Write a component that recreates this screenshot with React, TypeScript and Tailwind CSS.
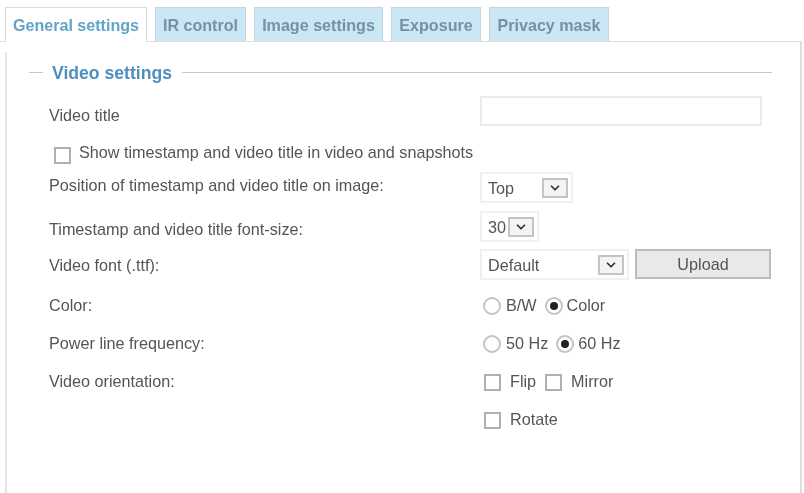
import { ChevronDown } from 'lucide-react';

const tabs = [
  { label: 'General settings', width: 'w-[142px]', active: true },
  { label: 'IR control', width: 'w-[91px]' },
  { label: 'Image settings', width: 'w-[129px]' },
  { label: 'Exposure', width: 'w-[90px]' },
  { label: 'Privacy mask', width: 'w-[120px]' },
];

function Tab(props: { label: string; width: string; active?: boolean }) {
  if (props.active) {
    return (
      <div
        className={`${props.width} h-[35px] -mb-px flex items-center justify-center bg-white border border-b-0 border-[#dadada] text-[16.1px] font-bold text-[#63a3c8]`}
      >
        {props.label}
      </div>
    );
  }
  return (
    <div
      className={`${props.width} h-[34px] flex items-center justify-center bg-[#cbe7f6] border border-b-0 border-[#c6d6df] text-[16.1px] font-bold text-[#7492a6]`}
    >
      {props.label}
    </div>
  );
}

function Row(props: { height: string; label?: string; labelClass?: string; children?: React.ReactNode }) {
  return (
    <div className={`${props.height} flex items-center`}>
      <div className={`w-[431px] shrink-0 text-[#555] ${props.labelClass ?? ''}`}>{props.label}</div>
      <div className="flex items-center">{props.children}</div>
    </div>
  );
}

function Select(props: { value: string; width: string }) {
  return (
    <div className={`${props.width} h-[31px] flex items-center justify-between pl-[6px] pr-[3px] border-2 border-[#f0f0f0] text-[#555]`}>
      <span>{props.value}</span>
      <span className="w-[26px] h-[20px] flex items-center justify-center border-2 border-[#c4c4c4] bg-[#f4f4f4]">
        <ChevronDown className="w-[14px] h-[14px] text-[#333]" strokeWidth={3} />
      </span>
    </div>
  );
}

function Radio(props: { checked?: boolean }) {
  return (
    <span className="w-[18px] h-[18px] mt-[2px] rounded-full border-2 border-[#c4c4c4] flex items-center justify-center">
      {props.checked && <span className="w-[8px] h-[8px] rounded-full bg-[#222]" />}
    </span>
  );
}

function Checkbox() {
  return <span className="block w-[17px] h-[17px] mt-[2px] border-2 border-[#b0b0b0]" />;
}

export default function App() {
  return (
    <div className="w-[804px] h-[493px] overflow-hidden bg-white pt-[7px] blur-[0.5px] text-[16.2px] leading-[20px] font-['Liberation_Sans',Arial,sans-serif]">
      <div className="flex gap-[8px] pl-[5px]">
        {tabs.map((t) => (
          <Tab key={t.label} {...t} />
        ))}
      </div>
      <div className="h-[452px] border-t border-r-2 border-[#dedede] pt-[10px] mr-[2px]">
        <div className="h-full ml-[5px] border-l-2 border-[#e6e6e6]">
          <div className="flex items-center h-[40px] pl-[22px] pr-[28px] pt-[1px]">
            <span className="w-[14px] h-px bg-[#c8c8c8]" />
            <span className="ml-[9px] mr-[10px] text-[17.6px] font-bold text-[#4f8fc0]">Video settings</span>
            <span className="flex-1 h-px bg-[#c8c8c8]" />
          </div>
          <div className="pl-[42px]">
            <Row height="h-[37px]" label="Video title" labelClass="mt-[9px]">
              <div className="w-[282px] h-[30px] border-2 border-[#ebebeb]" />
            </Row>
            <div className="h-[40px] flex items-center pl-[5px] gap-[8px] text-[#555]">
              <span className="mt-[10px]">
                <Checkbox />
              </span>
              <span className="mt-[6px]">Show timestamp and video title in video and snapshots</span>
            </div>
            <Row height="h-[37px]" label="Position of timestamp and video title on image:" labelClass="mb-[5px]">
              <Select value="Top" width="w-[93px]" />
            </Row>
            <Row height="h-[41px]" label="Timestamp and video title font-size:" labelClass="mt-[5px]">
              <Select value="30" width="w-[59px]" />
            </Row>
            <Row height="h-[35px]" label="Video font (.ttf):">
              <Select value="Default" width="w-[149px]" />
              <button className="ml-[6px] w-[136px] h-[30px] -mt-[1px] border-2 border-[#bcbcbc] bg-[#e9e9e9] text-[#555]">
                Upload
              </button>
            </Row>
            <Row height="h-[46px]" label="Color:">
              <div className="flex items-center pl-[3px] text-[#555]">
                <Radio />
                <span className="ml-[5px] mr-[8px]">B/W</span>
                <Radio checked />
                <span className="ml-[4px]">Color</span>
              </div>
            </Row>
            <Row height="h-[30px]" label="Power line frequency:">
              <div className="flex items-center pl-[3px] text-[#555]">
                <Radio />
                <span className="ml-[5px] mr-[8px]">50 Hz</span>
                <Radio checked />
                <span className="ml-[4px]">60 Hz</span>
              </div>
            </Row>
            <Row height="h-[46px]" label="Video orientation:">
              <div className="flex items-center pl-[4px] text-[#555]">
                <Checkbox />
                <span className="ml-[9px] mr-[9px]">Flip</span>
                <Checkbox />
                <span className="ml-[9px]">Mirror</span>
              </div>
            </Row>
            <Row height="h-[30px]">
              <div className="flex items-center pl-[4px] text-[#555]">
                <Checkbox />
                <span className="ml-[9px]">Rotate</span>
              </div>
            </Row>
          </div>
        </div>
      </div>
    </div>
  );
}
